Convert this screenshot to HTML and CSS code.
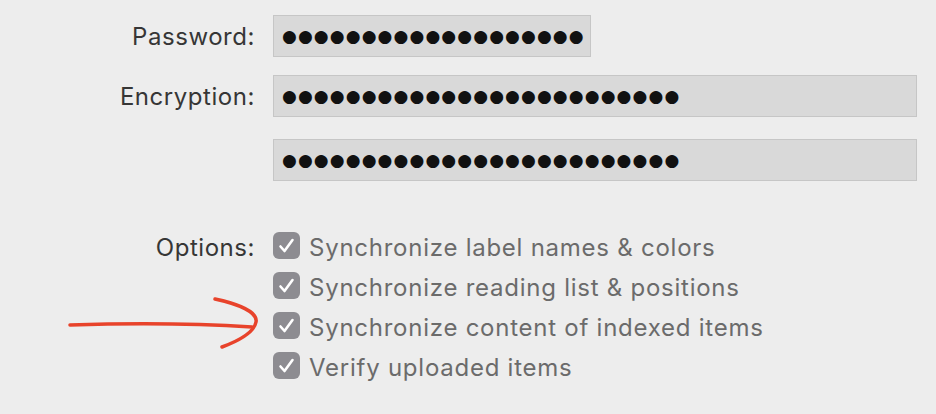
FILE: index.html
```html
<!DOCTYPE html>
<html lang="en">
<head>
<meta charset="UTF-8">
<title>Sync Settings</title>
<link rel="stylesheet" href="styles.css">
</head>
<body>

<div class="form">
  <div class="row">
    <span class="label">Password:</span>
    <div class="field short">●●●●●●●●●●●●●●●●●●●</div>
  </div>
  <div class="row">
    <span class="label">Encryption:</span>
    <div class="field">●●●●●●●●●●●●●●●●●●●●●●●●●</div>
  </div>
  <div class="row repeat">
    <span class="label"></span>
    <div class="field">●●●●●●●●●●●●●●●●●●●●●●●●●</div>
  </div>

  <div class="row options">
    <span class="label">Options:</span>
    <ul class="checks">
      <li><span class="box"><svg viewBox="0 0 27 27"><path d="M7.5 14.5 L11.5 19 L19.5 8"/></svg></span><span class="text">Synchronize label names &amp; colors</span></li>
      <li><span class="box"><svg viewBox="0 0 27 27"><path d="M7.5 14.5 L11.5 19 L19.5 8"/></svg></span><span class="text">Synchronize reading list &amp; positions</span></li>
      <li><span class="box"><svg viewBox="0 0 27 27"><path d="M7.5 14.5 L11.5 19 L19.5 8"/></svg></span><span class="text">Synchronize content of indexed items</span></li>
      <li><span class="box"><svg viewBox="0 0 27 27"><path d="M7.5 14.5 L11.5 19 L19.5 8"/></svg></span><span class="text">Verify uploaded items</span></li>
    </ul>
  </div>
</div>

<!-- hand drawn arrow pointing at the third option -->
<svg class="arrow" viewBox="0 0 936 414">
  <path d="M70 325 C 130 323, 190 323, 252 327"/>
  <path d="M215 299 C 238 304, 258 312, 256 322 C 254 333, 238 341, 222 347"/>
</svg>

</body>
</html>
```

FILE: styles.css
```css
body {
  margin: 0;
  background-color: #ededed;
  font-family: 'Inter', 'Noto Sans', sans-serif;
  width: 936px;
  height: 414px;
  overflow: hidden;
  position: relative;
}
.form {
  padding-top: 15px;
}
.row {
  display: flex;
  align-items: center;
  gap: 18px;
  margin-bottom: 18px;
}
.row.repeat {
  margin-top: 22px;
}
.row.options {
  align-items: flex-start;
  margin-top: 51px;
}
.label {
  width: 255px;
  text-align: right;
  font-size: 24px;
  letter-spacing: 0.55px;
  color: #363636;
  flex-shrink: 0;
}
.options .label {
  line-height: 27px;
  padding-top: 2px;
}
.field {
  box-sizing: border-box;
  width: 644px;
  height: 42px;
  background-color: #d9d9d9;
  border: 1px solid #c6c6c6;
  padding-left: 8px;
  font-family: 'DejaVu Sans', sans-serif;
  font-size: 17px;
  line-height: 40px;
  letter-spacing: 1.1px;
  color: #111;
  white-space: nowrap;
  overflow: hidden;
}
.field.short {
  width: 318px;
}
.checks {
  list-style: none;
  margin: 0;
  padding: 0;
  display: flex;
  flex-direction: column;
  gap: 13px;
}
.checks li {
  display: flex;
  align-items: flex-start;
  gap: 9px;
  height: 27px;
  font-size: 24px;
  letter-spacing: 0.75px;
  line-height: 27px;
  color: #6b6b6b;
}
.checks .text {
  padding-top: 2px;
}
.box {
  width: 27px;
  height: 27px;
  border-radius: 6px;
  background-color: #8d8c91;
  display: block;
}
.box svg {
  width: 27px;
  height: 27px;
  display: block;
  fill: none;
  stroke: #fff;
  stroke-width: 2.6;
  stroke-linecap: round;
  stroke-linejoin: round;
}
.arrow {
  position: absolute;
  left: 0;
  top: 0;
  width: 936px;
  height: 414px;
  pointer-events: none;
  fill: none;
  stroke: #e8432b;
  stroke-width: 3.5;
  stroke-linecap: round;
}
```
